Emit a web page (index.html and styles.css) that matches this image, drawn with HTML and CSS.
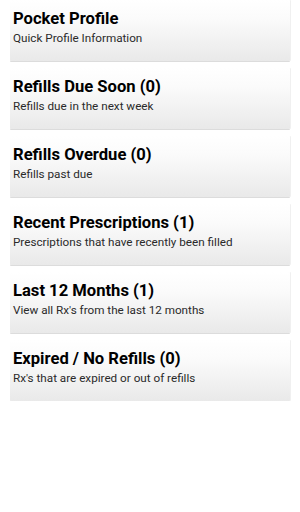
FILE: index.html
```html
<!DOCTYPE html>
<html lang="en">

<head>
    <meta charset="UTF-8" />
    <meta name="viewport" content="width=device-width, initial-scale=1.0" />
    <title>Pocket Profile</title>

    <link rel="stylesheet" href="styles.css">
</head>

<body>
    <ul class="menu">
        <li class="card">
            <h2 class="title">Pocket Profile</h2>
            <p class="subtitle">Quick Profile Information</p>
        </li>
        <li class="card">
            <h2 class="title">Refills Due Soon (0)</h2>
            <p class="subtitle">Refills due in the next week</p>
        </li>
        <li class="card">
            <h2 class="title">Refills Overdue (0)</h2>
            <p class="subtitle">Refills past due</p>
        </li>
        <li class="card">
            <h2 class="title">Recent Prescriptions (1)</h2>
            <p class="subtitle">Prescriptions that have recently been filled</p>
        </li>
        <li class="card">
            <h2 class="title">Last 12 Months (1)</h2>
            <p class="subtitle">View all Rx's from the last 12 months</p>
        </li>
        <li class="card">
            <h2 class="title">Expired / No Refills (0)</h2>
            <p class="subtitle">Rx's that are expired or out of refills</p>
        </li>
    </ul>
</body>

</html>
```

FILE: styles.css
```css
* {
    margin: 0;
    padding: 0;
    box-sizing: border-box;
}

html {
    font-family: Roboto, "Noto Sans", sans-serif;
}

body {
    background: #fff;
    padding: 0 10px;
    width: 300px;
}

.menu {
    display: flex;
    flex-direction: column;
    gap: 7px;
    list-style-type: none;
}

.card {
    background: linear-gradient(#ffffff, #fbfbfb 30%, #e9e9e9);
    box-shadow: 0 1px 0 #dcdcdc, 1px 0 0 #f0f0f0;
    border-radius: 1px;
    height: 61px;
    padding: 9px 3px 0;
}

.title {
    color: #000;
    font-size: 16.6px;
    font-weight: 700;
    line-height: 19px;
}

.subtitle {
    color: #2a2a2a;
    font-size: 11.7px;
    line-height: 14px;
    margin-top: 3px;
}
```
